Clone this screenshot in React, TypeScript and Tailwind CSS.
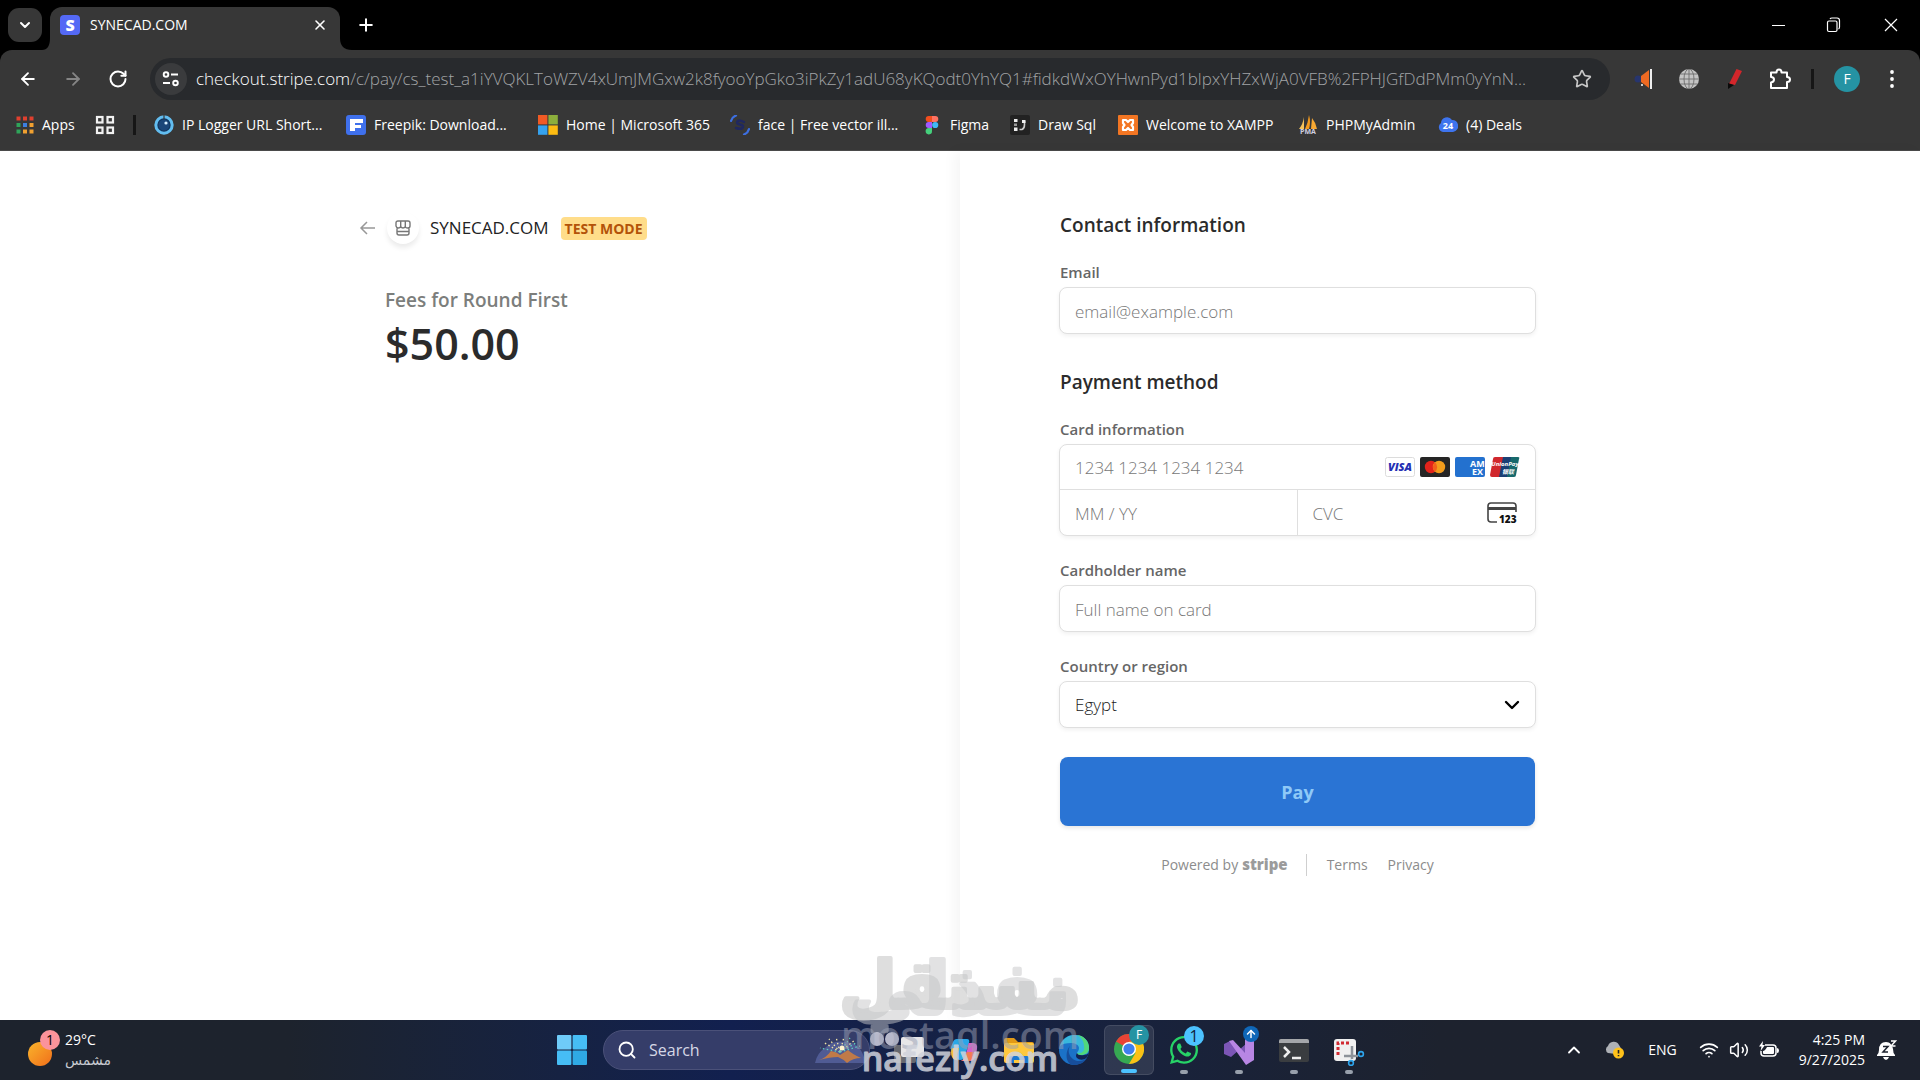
import type { ReactNode } from 'react'
import {
    ArrowLeft,
    ArrowRight,
    ArrowUp,
    ChevronDown,
    ChevronUp,
    Plus,
    RotateCw,
    Search,
    Star,
    Volume2,
    Wifi,
    X,
} from 'lucide-react'
import { FaWhatsapp } from 'react-icons/fa'

const URL_HOST = 'checkout.stripe.com'
const URL_PATH =
    '/c/pay/cs_test_a1iYVQKLToWZV4xUmJMGxw2k8fyooYpGko3iPkZy1adU68yKQodt0YhYQ1#fidkdWxOYHwnPyd1blpxYHZxWjA0VFB%2FPHJGfDdPMm0yYnN...'

/* ---------- bookmark icons ---------- */

function AppsIcon() {
    const colors = ['#e0402f', '#e0402f', '#e0402f', '#2fa45a', '#3d7fe0', '#f0a030', '#2fa45a', '#f0a030', '#f0a030']
    return (
        <svg className="h-[18px] w-[18px]" viewBox="0 0 18 18">
            {colors.map((c, i) => (
                <rect key={i} x={(i % 3) * 6.5 + 0.5} y={Math.floor(i / 3) * 6.5 + 0.5} width="4" height="4" fill={c} />
            ))}
        </svg>
    )
}

function GridIcon() {
    return (
        <svg className="h-5 w-5" viewBox="0 0 20 20" fill="none" stroke="#f1f1f1" strokeWidth="2.2">
            <rect x="2" y="2" width="5.5" height="5.5" />
            <rect x="12.5" y="2" width="5.5" height="5.5" />
            <rect x="2" y="12.5" width="5.5" height="5.5" />
            <rect x="12.5" y="12.5" width="5.5" height="5.5" />
        </svg>
    )
}

function IpLoggerIcon() {
    return (
        <svg className="h-5 w-5" viewBox="0 0 20 20">
            <circle cx="10" cy="10" r="8.2" fill="#12365e" stroke="#62bdf0" strokeWidth="3" />
            <path d="M10 0v4" stroke="#373737" strokeWidth="1.2" />
            <circle cx="10" cy="10" r="5.5" fill="#1b4679" />
            <circle cx="12" cy="8" r="1.6" fill="#d8efff" />
        </svg>
    )
}

function FreepikIcon() {
    return (
        <svg className="h-5 w-5" viewBox="0 0 20 20">
            <rect width="20" height="20" rx="3" fill="#3f70ec" />
            <path d="M4 4h13v4H9v2h6v3H9v3H4z" fill="#fff" />
        </svg>
    )
}

function MicrosoftIcon() {
    return (
        <svg className="h-5 w-5" viewBox="0 0 20 20">
            <rect x="0" y="0" width="9.4" height="9.4" fill="#f15a24" />
            <rect x="10.4" y="0" width="9.4" height="9.4" fill="#8cae3c" />
            <rect x="0" y="10.4" width="9.4" height="9.4" fill="#35a2ee" />
            <rect x="10.4" y="10.4" width="9.4" height="9.4" fill="#fcbb12" />
        </svg>
    )
}

function FaceIcon() {
    return (
        <svg className="h-5 w-5" viewBox="0 0 20 20" fill="none" strokeLinecap="round">
            <path d="M1 6q1-4 5-5.5" stroke="#3d6fe0" strokeWidth="2.2" />
            <path d="M19 14q-1 4-5 5.5" stroke="#3d6fe0" strokeWidth="2.2" />
            <path d="M14 7q-6-3-7 0c-1 3 7 2 6 5q-1 3-7 1" stroke="#20285f" strokeWidth="2.4" />
        </svg>
    )
}

function FigmaIcon() {
    return (
        <svg className="h-5 w-5" viewBox="0 0 20 20">
            <path d="M6.7 1H10v6H6.700a3 3 0 010-6z" fill="#f24e1e" />
            <path d="M10 1h3.3a3 3 0 010 6H10z" fill="#ff7262" />
            <path d="M6.7 7H10v6H6.700a3 3 0 010-6z" fill="#a259ff" />
            <circle cx="13.2" cy="10" r="3.1" fill="#40b8f5" />
            <path d="M6.7 13H10v3a3.2 3.2 0 11-3.3-3z" fill="#45d07c" />
        </svg>
    )
}

function DrawSqlIcon() {
    return (
        <svg className="h-5 w-5" viewBox="0 0 20 20">
            <rect width="20" height="20" rx="2" fill="#222" />
            <rect x="4" y="4" width="3.5" height="3" fill="#eee" />
            <rect x="4" y="8.5" width="3" height="2.5" fill="#999" />
            <rect x="4" y="12.5" width="3.5" height="3.5" fill="#eee" />
            <path d="M9.500 14.500H12q2.500-1 2.500-5V6" stroke="#ccc" strokeWidth="1.6" fill="none" />
            <rect x="12" y="5" width="3.5" height="3" fill="#eee" />
        </svg>
    )
}

function XamppIcon() {
    return (
        <svg className="h-5 w-5" viewBox="0 0 20 20">
            <rect width="20" height="20" rx="1" fill="#f37623" />
            <path
                d="M5 5l3 0 2 2 2-2 3 0 0 3-1.500 2 1.500 2 0 3-3 0-2-2-2 2-3 0 0-3 1.500-2L5 8z"
                fill="none"
                stroke="#fff"
                strokeWidth="2.2"
                strokeLinejoin="round"
            />
        </svg>
    )
}

function PmaIcon() {
    return (
        <svg className="h-5 w-5" viewBox="0 0 20 20">
            <path d="M6 2v12H1q4-5 5-12z" fill="#f5c25a" />
            <path d="M11 0q2 7 0 14H7q3-6 4-14z" fill="#f49a1c" />
            <path d="M14 3q4 5 5 11h-6z" fill="#f7a832" />
            <text x="10" y="19" textAnchor="middle" fontSize="7" fontWeight="700" fontFamily="Open Sans, sans-serif" fill="#d0d0e0">
                PMA
            </text>
        </svg>
    )
}

function DealsIcon() {
    return (
        <svg className="h-5 w-5" viewBox="0 0 20 20">
            <path d="M5 17a5 5 0 01-2-9 6 6 0 0111-3 6 6 0 013.500 11L15 17z" fill="#3e74ee" />
            <text x="10" y="14" textAnchor="middle" fontSize="9" fontWeight="700" fontFamily="Open Sans, sans-serif" fill="#fff">
                24
            </text>
        </svg>
    )
}

const bookmarks: { label: string; icon: ReactNode; width: string }[] = [
    { label: 'IP Logger URL Short...', icon: <IpLoggerIcon />, width: 'w-48' },
    { label: 'Freepik: Download...', icon: <FreepikIcon />, width: 'w-48' },
    { label: 'Home | Microsoft 365', icon: <MicrosoftIcon />, width: 'w-48' },
    { label: 'face | Free vector ill...', icon: <FaceIcon />, width: 'w-48' },
    { label: 'Figma', icon: <FigmaIcon />, width: 'w-[88px]' },
    { label: 'Draw Sql', icon: <DrawSqlIcon />, width: 'w-[108px]' },
    { label: 'Welcome to XAMPP', icon: <XamppIcon />, width: 'w-[180px]' },
    { label: 'PHPMyAdmin', icon: <PmaIcon />, width: 'w-[140px]' },
    { label: '(4) Deals', icon: <DealsIcon />, width: 'w-[100px]' },
]

/* ---------- browser ---------- */

function TabStrip() {
    return (
        <div className="flex h-[50px] items-end bg-black pl-2 text-white">
            <button aria-label="Search tabs" className="mb-2 flex h-[34px] w-[34px] items-center justify-center rounded-[11px] bg-[#373737]">
                <ChevronDown className="h-4 w-4" strokeWidth={3} />
            </button>
            <svg className="h-3 w-2" viewBox="0 0 8 12">
                <path d="M8 0v12H0q8 0 8-12z" fill="#373737" />
            </svg>
            <div className="flex h-[43px] w-[290px] items-center rounded-t-xl bg-[#373737] pr-3 pb-[7px] pl-[10px]">
                <span className="flex h-5 w-5 items-center justify-center rounded bg-[#5469f5] text-base leading-5 font-extrabold">S</span>
                <span className="ml-[10px] flex-1 text-sm">SYNECAD.COM</span>
                <button aria-label="Close tab">
                    <X className="h-4 w-4" strokeWidth={2.4} />
                </button>
            </div>
            <svg className="h-3 w-3" viewBox="0 0 12 12">
                <path d="M0 0v12h12Q0 12 0 0z" fill="#373737" />
            </svg>
            <button aria-label="New tab" className="mb-[15px] ml-1">
                <Plus className="h-5 w-5" strokeWidth={2.4} />
            </button>
            <div className="mb-[15px] ml-auto flex items-center gap-[41px] pr-[21px]">
                <button aria-label="Minimize" className="flex h-5 w-4 items-center justify-end">
                    <span className="h-px w-[13px] bg-white" />
                </button>
                <button aria-label="Restore">
                    <svg className="h-4 w-4" viewBox="0 0 16 16" fill="none" stroke="#fff" strokeWidth="1.2">
                        <rect x="1.5" y="4" width="9.5" height="10.5" rx="1.5" />
                        <path d="M4 2q.5-1 2-1h5q2.500 0 2.500 2.500V10q0 1.500-1 2" />
                    </svg>
                </button>
                <button aria-label="Close window">
                    <svg className="h-4 w-4" viewBox="0 0 16 16" stroke="#fff" strokeWidth="1.2">
                        <path d="M2 2l12 12M14 2L2 14" />
                    </svg>
                </button>
            </div>
        </div>
    )
}

function Toolbar() {
    return (
        <div className="flex h-[58px] items-center rounded-t-xl bg-[#373737] pr-[18px] pl-[18px]">
            <button aria-label="Back" className="mr-[25px]">
                <ArrowLeft className="h-5 w-5 text-white" strokeWidth={2.2} />
            </button>
            <button aria-label="Forward" className="mr-[25px]">
                <ArrowRight className="h-5 w-5 text-[#858585]" strokeWidth={2.2} />
            </button>
            <button aria-label="Reload" className="mr-[22px]">
                <RotateCw className="h-5 w-5 text-white" strokeWidth={2.4} />
            </button>
            <div className="flex h-[42px] min-w-0 flex-1 items-center rounded-full bg-[#282a2d] pr-[18px] pl-[5px]">
                <button aria-label="Site information" className="flex h-8 w-8 shrink-0 items-center justify-center rounded-full bg-[#3a3b3d]">
                    <svg className="h-5 w-5" viewBox="0 0 20 20" fill="none" stroke="#fff" strokeWidth="1.9">
                        <circle cx="5" cy="5.5" r="2.3" />
                        <path d="M10 5.500h7M2 14h7" />
                        <circle cx="14.5" cy="14" r="2.3" />
                    </svg>
                </button>
                <p className="ml-[9px] min-w-0 flex-1 overflow-hidden text-[17px] font-light whitespace-nowrap text-[#a2a4a6]">
                    <span className="text-white">{URL_HOST}</span>
                    {URL_PATH}
                </p>
                <button aria-label="Bookmark this tab" className="ml-3">
                    <Star className="h-5 w-5 text-[#c7c7c7]" strokeWidth={2} />
                </button>
            </div>
            <div className="ml-6 flex items-center gap-[25px]">
                <button aria-label="Announcements">
                    <svg className="h-5 w-5" viewBox="0 0 20 20">
                        <circle cx="4" cy="10" r="3.5" fill="#27356e" />
                        <path d="M7 7l8-6v18l-8-6z" fill="#ee6a22" />
                        <rect x="16" y="0" width="2" height="20" fill="#eee" />
                        <circle cx="8" cy="16" r="1" fill="#fff" />
                    </svg>
                </button>
                <button aria-label="Web proxy">
                    <svg className="h-5 w-5" viewBox="0 0 20 20" fill="none" stroke="#6d6d6d" strokeWidth=".9">
                        <circle cx="10" cy="10" r="10" fill="#c4c4c4" stroke="none" />
                        <ellipse cx="10" cy="10" rx="5" ry="10" />
                        <path d="M10 0v20M0 10h20M1.500 5h17M1.500 15h17" />
                    </svg>
                </button>
                <button aria-label="Highlighter">
                    <svg className="h-5 w-5" viewBox="0 0 20 20">
                        <path d="M12.500 0l5.500 2-7 14-6-1z" fill="#d3262b" />
                        <path d="M4 14l6 2-3 2-3 2z" fill="#0a0a0a" />
                    </svg>
                </button>
                <button aria-label="Extensions">
                    <svg className="h-[22px] w-[22px]" viewBox="0 0 22 22" fill="none" stroke="#fff" strokeWidth="2" strokeLinejoin="round">
                        <path d="M2 4.500h5.500q0-3 2.500-3t2.500 3H18V9q3 0 3 2.500T18 14v6H2v-5.500q3-.5 3-3T2 9z" />
                    </svg>
                </button>
            </div>
            <span className="ml-5 h-5 w-[3px] bg-[#161616]" />
            <button aria-label="Profile" className="ml-5 h-[26px] w-[26px] rounded-full bg-[#2593a3] text-sm text-white">
                F
            </button>
            <button aria-label="Menu" className="ml-[22px]">
                <svg className="h-5 w-5" viewBox="0 0 20 20" fill="#fff">
                    <circle cx="10" cy="3" r="1.9" />
                    <circle cx="10" cy="10" r="1.9" />
                    <circle cx="10" cy="17" r="1.9" />
                </svg>
            </button>
        </div>
    )
}

function BookmarksBar() {
    return (
        <nav className="flex h-[43px] items-center border-b border-[#4a4a4a] bg-[#373737] pb-2 pl-4 text-sm text-white">
            <a href="#apps" className="flex w-[79px] items-center gap-2">
                <AppsIcon />
                Apps
            </a>
            <a href="#groups" aria-label="Tab groups">
                <GridIcon />
            </a>
            <span className="mr-[18px] ml-[18px] h-5 w-[3px] bg-[#161616]" />
            {bookmarks.map((b) => (
                <a key={b.label} href="#bookmark" className={`flex items-center gap-2 whitespace-nowrap ${b.width}`}>
                    <span className="shrink-0">{b.icon}</span>
                    {b.label}
                </a>
            ))}
        </nav>
    )
}

/* ---------- checkout ---------- */

function CardBrands() {
    return (
        <div className="flex gap-[5px]">
            <svg className="h-5 w-[30px]" viewBox="0 0 30 20">
                <rect x=".5" y=".5" width="29" height="19" rx="2" fill="#fff" stroke="#dcdcdc" />
                <text x="15" y="14" textAnchor="middle" fontSize="11" fontWeight="800" fontStyle="italic" fontFamily="Open Sans, sans-serif" fill="#2430b4">
                    VISA
                </text>
            </svg>
            <svg className="h-5 w-[30px]" viewBox="0 0 30 20">
                <rect width="30" height="20" rx="2" fill="#252525" />
                <circle cx="11" cy="10" r="6.2" fill="#e3231b" />
                <circle cx="19" cy="10" r="6.2" fill="#f29c1c" />
                <path d="M15 5.300a6.200 6.200 0 010 9.400 6.200 6.200 0 010-9.400z" fill="#f2601c" />
            </svg>
            <svg className="h-5 w-[30px]" viewBox="0 0 30 20">
                <rect width="30" height="20" rx="2" fill="#2371cf" />
                <g fontFamily="Open Sans, sans-serif" fontWeight="700" fontSize="9" fill="#fff">
                    <text x="15" y="10">AM</text>
                    <text x="17" y="18">EX</text>
                </g>
            </svg>
            <svg className="h-5 w-[30px]" viewBox="0 0 30 20">
                <path d="M5 0h10l-4 20H2q-2 0-2-2L3 2q0-2 2-2z" fill="#d0272d" />
                <path d="M13 0h9l-4 20H9z" fill="#1a3f74" />
                <path d="M21 0h7q2 0 1 2l-3 16q0 2-2 2h-7z" fill="#17696c" />
                <g fontFamily="Open Sans, Noto Sans CJK SC, sans-serif" fontStyle="italic" fontWeight="700" fill="#fff" textAnchor="middle">
                    <text x="15" y="9" fontSize="6">UnionPay</text>
                    <text x="18" y="17" fontSize="6">银联</text>
                </g>
            </svg>
        </div>
    )
}

function CvcIcon() {
    return (
        <svg className="h-6 w-[30px]" viewBox="0 0 30 24">
            <path d="M10 21H4q-3 0-3-3V5q0-3 3-3h22q3 0 3 3v6" fill="none" stroke="#444" strokeWidth="1.6" />
            <rect x="1" y="6" width="28" height="3" fill="#444" />
            <text x="12" y="22" fontSize="10" fontWeight="800" fontFamily="Open Sans, sans-serif" fill="#111">
                123
            </text>
        </svg>
    )
}

const fieldBox = 'w-full rounded-lg border border-[#dfdfdf] bg-white shadow-[0_2px_4px_rgba(0,0,0,0.06)]'
const inputText = 'px-[15px] pt-px text-[17px] font-light text-[#222] placeholder:text-[#777] focus:outline-none'

function Field({ id, label, children }: { id: string; label: string; children: ReactNode }) {
    return (
        <div>
            <label htmlFor={id} className="mb-[5px] block pl-px text-[15px] leading-5 font-semibold text-[#666]">
                {label}
            </label>
            {children}
        </div>
    )
}

function OrderSummary() {
    return (
        <section className="flex w-1/2 justify-end pr-[100px]">
            <div className="w-full max-w-[475px] pt-[62px]">
                <div className="-ml-[26px] flex h-[30px] items-center">
                    <button aria-label="Go back">
                        <svg className="h-4 w-4" viewBox="0 0 16 16" fill="none" stroke="#989898" strokeWidth="1.5">
                            <path d="M16 8H2M8 2L2 8l6 6" />
                        </svg>
                    </button>
                    <span className="ml-3 flex h-8 w-8 items-center justify-center rounded-full bg-white shadow-[0_4px_5px_rgba(0,0,0,0.08)]">
                        <svg className="h-4 w-4" viewBox="0 0 16 16" fill="none" stroke="#777" strokeWidth="1.4">
                            <path d="M3 1h10q2 0 2 2v3q0 2-2.300 2T10.300 6.500Q9.500 8 8 8T5.700 6.500Q5 8 3.300 8T1 6V3q0-2 2-2zM5.700 1v5.500M10.300 1v5.500M2 8.500V13q0 2 2 2h8q2 0 2-2V8.500M2 11.500h12" />
                        </svg>
                    </span>
                    <h1 className="ml-[11px] text-[17px] font-medium text-[#222]">SYNECAD.COM</h1>
                    <span className="ml-3 rounded bg-[#ffdd8a] px-1 text-sm leading-[23px] font-bold text-[#b35309]">TEST MODE</span>
                </div>
                <p className="mt-[43px] text-[19px] leading-7 font-semibold text-[#7c7e7c]">Fees for Round First</p>
                <p className="text-[43px] leading-[60px] font-semibold text-[#2b2b2b]">$50.00</p>
            </div>
        </section>
    )
}

function PaymentForm() {
    return (
        <section className="w-1/2 pl-[99px] shadow-[-6px_0_12px_rgba(0,0,0,0.04)]">
            <form className="flex w-full max-w-[477px] flex-col pt-[62px]" onSubmit={(e) => e.preventDefault()}>
                <h2 className="mb-[25px] pl-px text-[19px] leading-6 font-semibold text-[#2b2b2b]">Contact information</h2>
                <Field id="email" label="Email">
                    <input id="email" type="email" placeholder="email@example.com" className={`h-[47px] ${fieldBox} ${inputText}`} />
                </Field>

                <h2 className="mt-9 mb-[25px] pl-px text-[19px] leading-6 font-semibold text-[#2b2b2b]">Payment method</h2>
                <div className="flex flex-col gap-6">
                    <Field id="card" label="Card information">
                        <div className={`overflow-hidden ${fieldBox}`}>
                            <div className="flex h-[45px] items-center border-b border-[#dfdfdf] pr-[15px]">
                                <input id="card" type="text" placeholder="1234 1234 1234 1234" className={`h-full min-w-0 flex-1 ${inputText}`} />
                                <CardBrands />
                            </div>
                            <div className="flex h-[45px]">
                                <input aria-label="Expiration" type="text" placeholder="MM / YY" className={`h-full w-1/2 min-w-0 border-r border-[#dfdfdf] ${inputText}`} />
                                <div className="flex w-1/2 items-center pr-[18px]">
                                    <input aria-label="CVC" type="text" placeholder="CVC" className={`h-full min-w-0 flex-1 ${inputText}`} />
                                    <CvcIcon />
                                </div>
                            </div>
                        </div>
                    </Field>
                    <Field id="name" label="Cardholder name">
                        <input id="name" type="text" placeholder="Full name on card" className={`h-[47px] ${fieldBox} ${inputText}`} />
                    </Field>
                    <Field id="country" label="Country or region">
                        <div className="relative">
                            <select id="country" defaultValue="Egypt" className={`h-[47px] appearance-none ${fieldBox} ${inputText}`}>
                                <option>Egypt</option>
                            </select>
                            <ChevronDown className="pointer-events-none absolute top-3 right-3 h-6 w-6 text-black" strokeWidth={2.4} />
                        </div>
                    </Field>
                </div>
                <button type="submit" className="mx-px mt-[29px] h-[69px] rounded-lg bg-[#2a74d4] text-lg font-bold text-[#8fc9f7] shadow-[0_2px_4px_rgba(0,0,0,0.1)]">
                    Pay
                </button>
                <div className="mt-7 flex h-[22px] items-center justify-center text-sm font-normal text-[#8c8c8c]">
                    <span>Powered by</span>
                    <span className="ml-1 text-[15px] font-extrabold text-[#9b9b9b]">stripe</span>
                    <span className="mr-5 ml-[18px] h-[22px] w-px bg-[#cfcfcf]" />
                    <a href="#terms">Terms</a>
                    <a href="#privacy" className="ml-5">
                        Privacy
                    </a>
                </div>
            </form>
        </section>
    )
}

/* ---------- taskbar ---------- */

function TaskItem({ label, active, running, children }: { label: string; active?: boolean; running?: boolean; children: ReactNode }) {
    return (
        <button
            aria-label={label}
            className={`mr-[5px] flex h-[50px] w-[50px] flex-col items-center justify-end rounded-md ${active ? 'border border-white/10 bg-white/10' : ''}`}
        >
            <span className="relative flex h-8 w-8 items-center justify-center">{children}</span>
            <span className={`mt-1 mb-px h-1 rounded-full ${active ? 'w-4 bg-[#4cc2ff]' : running ? 'w-2 bg-[#98a0ac]' : 'w-2'}`} />
        </button>
    )
}

function TaskbarApps() {
    return (
        <div className="flex items-center pl-4">
            <button aria-label="Start" className="mr-4">
                <svg className="h-[30px] w-[30px]" viewBox="0 0 30 30" fill="#46bdf5">
                    <rect x="0" y="0" width="14.4" height="14.4" rx="1" fill="#6fcbf8" />
                    <rect x="15.6" y="0" width="14.4" height="14.4" rx="1" />
                    <rect x="0" y="15.6" width="14.4" height="14.4" rx="1" />
                    <rect x="15.6" y="15.6" width="14.4" height="14.4" rx="1" fill="#2fa9e4" />
                </svg>
            </button>
            <div className="mr-[14px] flex h-10 w-[267px] items-center rounded-full border border-[#4b5179] bg-[#353d69] pl-[13px]">
                <Search className="h-5 w-5 shrink-0 text-white" strokeWidth={2.2} />
                <input aria-label="Search" type="text" placeholder="Search" className="ml-3 min-w-0 flex-1 text-base text-white placeholder:text-[#d5d8e6] focus:outline-none" />
                {/* fireworks over a mountain */}
                <svg className="mr-1 h-7 w-[50px] shrink-0" viewBox="0 0 50 28">
                    <path d="M0 27q2-10 10-15 8-8 20-6 14 0 19 15l1 6z" fill="#505b94" />
                    <path d="M4 24q7-2 12-9 6 1 9 4l8-5q4 4 13 8-8 0-14 5-4-4-9-6-8 0-19 3z" fill="#c07a48" />
                    <g strokeWidth="1.3" strokeDasharray="1.500 2.500">
                        <path d="M25 16L8 6M25 16L14 3M25 16L21 1M25 16L29 1M25 16L40 4" stroke="#f3e7a6" />
                        <path d="M25 16l20-6M25 16L5 12M25 16l10-14M25 16l16-9" stroke="#5ed0c0" />
                    </g>
                    <circle cx="27" cy="12" r="2.5" fill="#fff4cf" />
                </svg>
            </div>
            <TaskItem label="Task view">
                <svg className="h-8 w-8" viewBox="0 0 32 32">
                    <rect x="1" y="11" width="22" height="18" rx="2" fill="#66686f" />
                    <rect x="8" y="3" width="23" height="20" rx="2" fill="#e6e6e8" />
                </svg>
            </TaskItem>
            <TaskItem label="Copilot">
                <svg className="h-7 w-7" viewBox="0 0 28 28">
                    <path d="M7 3h10q3 0 2 4l-4 13q-1 4-5 4-4 0-3-4l1-4H4q-4 0-3-5l2-5q1-3 4-3z" fill="#29a7e8" />
                    <path d="M2 12h7l-2 8q-1 4 2 4-5 1-7-3-2-5 0-9z" fill="#f2c23e" />
                    <path d="M19 7h4q5 0 4 6l-2 8q-1 4-5 4h-9q3-1 4-5l3-9q0-4 1-4z" fill="#d660c8" />
                    <path d="M17 16h8l-1 5q-1 4-5 4h-8q3-1 4-5z" fill="#f27a53" />
                </svg>
            </TaskItem>
            <TaskItem label="File Explorer">
                <svg className="h-[30px] w-[30px]" viewBox="0 0 30 30">
                    <path d="M0 5q0-2 2-2h8l4 4h14q2 0 2 2v5H0z" fill="#e29a17" />
                    <rect x="0" y="8" width="30" height="20" rx="2" fill="#ffc83d" />
                    <path d="M5 28v-5q0-2 2-2h16q2 0 2 2v5h-5v-3H10v3z" fill="#1d78d0" />
                </svg>
            </TaskItem>
            <TaskItem label="Edge">
                <svg className="h-8 w-8" viewBox="0 0 32 32">
                    <circle cx="16" cy="16" r="15" fill="#1b72c8" />
                    <path d="M2 12C5 3 12 1 17 1c9 0 14 6 14 13 0 5-4 7-8 7-3 0-4-1-4-2s2-2 2-5c0-3-4-5-8-5-5 0-9 1-11 3z" fill="#39b7dc" />
                    <path d="M19 1c8 1 12 7 12 13 0 5-4 7-8 7-3 0-4-1-4-2 5 1 8-2 7-7 0-5-3-9-7-11z" fill="#50d87c" />
                    <path d="M12 12c-4 7 2 15 9 15 3 0 6-1 8-3-3 5-8 7-13 7C7 31 7 17 12 12z" fill="#174e9b" />
                    <path d="M19 19q1 3 7 2 3 0 5-2-1 4-4 6-5 2-8-1-2-2 0-5z" fill="#122252" />
                </svg>
            </TaskItem>
            <TaskItem label="Chrome" active>
                <svg className="h-[30px] w-[30px]" viewBox="0 0 30 30">
                    <circle cx="15" cy="15" r="15" fill="#36a852" />
                    <path d="M15 15L2 7.500a15 15 0 0126 0z" fill="#e94335" />
                    <path d="M15 7.500h13A15 15 0 0115 30l6.500-11z" fill="#fbc116" />
                    <circle cx="15" cy="15" r="7" fill="#fff" />
                    <circle cx="15" cy="15" r="5.6" fill="#3f7fee" />
                </svg>
                <span className="absolute -top-2 -right-1 flex h-5 w-5 items-center justify-center rounded-full bg-[#2593a3] text-xs text-white">F</span>
            </TaskItem>
            <TaskItem label="WhatsApp" running>
                <FaWhatsapp className="h-8 w-8 text-[#27d367]" />
                <span className="absolute -top-2 -right-1 flex h-5 w-5 items-center justify-center rounded-full bg-[#4cc2ff] text-base text-[#102040]">1</span>
            </TaskItem>
            <TaskItem label="Visual Studio" running>
                <svg className="h-8 w-8" viewBox="0 0 32 32">
                    <path d="M1 10l6-3 17 15V9L8 23l-7-3z" fill="#7c56b6" />
                    <path d="M22 2l9 5v19l-8 5L6 7l4-1 12 13z" fill="#b886e4" />
                </svg>
                <span className="absolute -top-2 -right-1 flex h-4 w-4 items-center justify-center rounded-full bg-[#0f67b8]">
                    <ArrowUp className="h-3 w-3 text-white" strokeWidth={3} />
                </span>
            </TaskItem>
            <TaskItem label="Terminal" running>
                <svg className="h-[30px] w-[30px]" viewBox="0 0 30 30">
                    <rect x="0" y="4" width="30" height="23" rx="2" fill="#3a3d40" />
                    <path d="M0 8V6q0-2 2-2h26q2 0 2 2v2z" fill="#a5a7aa" />
                    <path d="M5 12l5 5-5 5M13 23h9" fill="none" stroke="#eee" strokeWidth="2.5" />
                </svg>
            </TaskItem>
            <TaskItem label="Snipping Tool" running>
                <svg className="h-8 w-8" viewBox="0 0 32 32">
                    <rect x="1" y="5" width="22" height="22" rx="3" fill="#f0f0f0" />
                    <path d="M5 21V9h13" fill="none" stroke="#d12b32" strokeWidth="3" strokeDasharray="3 2" />
                    <path d="M19 12v13M11 22h14" stroke="#8d9299" strokeWidth="2.5" />
                    <circle cx="18" cy="29" r="2.4" fill="none" stroke="#2da5ed" strokeWidth="1.6" />
                    <circle cx="28" cy="20" r="2.4" fill="none" stroke="#2da5ed" strokeWidth="1.6" />
                </svg>
            </TaskItem>
        </div>
    )
}

function Taskbar() {
    return (
        <footer className="grid h-[60px] grid-cols-[1fr_auto_1fr] items-center bg-linear-to-r from-[#1d232d] from-15% via-[#12204f] via-38% to-[#1d222e] to-75% text-white">
            <div className="flex items-center pl-7">
                <div className="relative h-8 w-8">
                    <span className="absolute bottom-0 left-0 h-6 w-6 rounded-full bg-linear-to-br from-[#f8b42c] to-[#f06d1a]" />
                    <span className="absolute -top-1 right-0 flex h-5 w-5 items-center justify-center rounded-full bg-[#fb939b] text-sm text-black">1</span>
                </div>
                <div className="ml-[5px] text-sm leading-5">
                    <p>29°C</p>
                    <p dir="rtl" className="font-['DejaVu_Sans'] text-sm leading-5 text-[#c7cad0]">
                        مشمس
                    </p>
                </div>
            </div>
            <TaskbarApps />
            <div className="flex items-center justify-end pr-[23px]">
                <ChevronUp className="h-5 w-5" strokeWidth={2.2} />
                <svg className="ml-5 h-5 w-5" viewBox="0 0 20 20">
                    <path d="M4 13a4 4 0 010-7 6 6 0 0111-1l3 5-6 4z" fill="#aeb1b6" />
                    <circle cx="14.5" cy="13" r="5.5" fill="#ffc21a" />
                    <path d="M14.500 10v3.500M14.500 15v1.200" stroke="#222" strokeWidth="1.6" />
                </svg>
                <span className="ml-6 text-sm">ENG</span>
                <Wifi className="ml-[22px] h-5 w-5" strokeWidth={2} />
                <Volume2 className="ml-[10px] h-5 w-5" strokeWidth={1.8} />
                <svg className="ml-[10px] h-5 w-5" viewBox="0 0 20 20">
                    <path d="M6 5h8q3 0 3 3v5q0 3-3 3H5q-3 0-3-3v-2" fill="none" stroke="#fff" strokeWidth="1.5" />
                    <path d="M8 7h6q1 0 1 1v5q0 1-1 1H5q-1 0-1-1v-2q2 0 4-4zM18 8q2 0 2 2.500T18 13z" fill="#fff" />
                    <path d="M4 1L0 6.500h2.500L1.500 11 6 5H3.500z" fill="#fff" />
                </svg>
                <div className="ml-5 text-right text-sm leading-5">
                    <p>4:25 PM</p>
                    <p>9/27/2025</p>
                </div>
                {/* bell on do-not-disturb */}
                <svg className="ml-3 h-5 w-5" viewBox="0 0 20 20">
                    <path d="M0 15q2-2 2-5 0-8 7-8 6 0 7 7 0 4 2 6v1H0zM6 17h6q-1 3-3 3t-3-3z" fill="#fff" />
                    <path d="M6 6.500h5L6 12h5" fill="none" stroke="#1d222e" strokeWidth="1.5" />
                    <path d="M12 0h8v7h-5z" fill="#1d222e" />
                    <path d="M14 1h4.500L14 6h4.500" fill="none" stroke="#fff" strokeWidth="1.4" />
                </svg>
            </div>
        </footer>
    )
}

function Watermark() {
    return (
        <div aria-hidden="true" className="pointer-events-none absolute inset-x-0 bottom-0 flex justify-center">
            <svg className="h-[140px] w-60" viewBox="0 0 240 140" strokeLinejoin="round" textAnchor="middle">
                <g fontFamily="DejaVu Sans, sans-serif" fontWeight="700" direction="rtl">
                    <text x="120" y="68" fontSize="66" fill="#d3d3d3" stroke="#d3d3d3" strokeWidth="4" opacity=".75">
                        مستقل
                    </text>
                    <text x="120" y="74" fontSize="72" fill="#c6c7c9" stroke="#c6c7c9" strokeWidth="4" opacity=".5">
                        نفذلي
                    </text>
                </g>
                <circle cx="37" cy="99" r="7" fill="#c9cad9" opacity=".9" />
                <circle cx="52" cy="99" r="7" fill="#c9cad9" opacity=".9" />
                <text x="120" y="109" fontSize="38" fontWeight="600" fontFamily="Open Sans, sans-serif" fill="#9aa0b4" opacity=".5">
                    mostaql.com
                </text>
                <text x="120" y="131" fontSize="34" fontWeight="600" fontFamily="Open Sans, sans-serif" fill="#d0d3dc" stroke="#d0d3dc" strokeWidth="1" opacity=".85">
                    nafezly.com
                </text>
            </svg>
        </div>
    )
}

export default function App() {
    return (
        <div className="relative flex min-h-screen flex-col overflow-hidden bg-black font-['Open_Sans',sans-serif]">
            <header>
                <TabStrip />
                <Toolbar />
                <BookmarksBar />
            </header>
            <main className="flex flex-1 bg-white">
                <OrderSummary />
                <PaymentForm />
            </main>
            <Taskbar />
            <Watermark />
        </div>
    )
}
